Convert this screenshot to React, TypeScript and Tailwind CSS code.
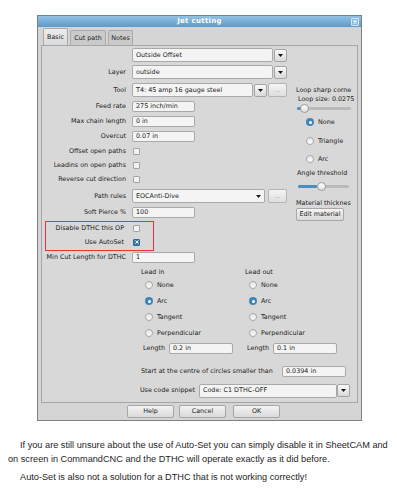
import React from 'react';

type Kids = { children?: React.ReactNode };

const Label = ({ children }: Kids) => (
  <div className="w-[84px] mr-[6px] shrink-0 text-right whitespace-nowrap">{children}</div>
);

const Field = ({ className = '', children }: Kids & { className?: string }) => (
  <div
    className={`flex items-center shrink-0 border border-[#a9a9a9] rounded-[2px] bg-[#f4f4f4] pl-[3px] whitespace-nowrap overflow-hidden ${className}`}
  >
    {children}
  </div>
);

const Arrow = () => (
  <svg width="5" height="3" viewBox="0 0 5 3">
    <path d="M0 0h5L2.5 3z" fill="#151515" />
  </svg>
);

const DropBtn = ({ className = '' }: { className?: string }) => (
  <div
    className={`flex items-center justify-center shrink-0 w-[13px] h-[13px] border border-[#a4a4a4] rounded-[2px] bg-linear-to-b from-[#fafafa] to-[#d9d9d9] ${className}`}
  >
    <Arrow />
  </div>
);

const DotsBtn = ({ className = '' }: { className?: string }) => (
  <div
    className={`flex items-center justify-center shrink-0 w-[19px] h-[14px] border border-[#b4b4b4] rounded-[2px] bg-linear-to-b from-[#f4f4f4] to-[#dedede] text-[#9a9a9a] ${className}`}
  >
    ...
  </div>
);

const Check = ({ on }: { on?: boolean }) =>
  on ? (
    <div className="flex items-center justify-center w-[7px] h-[7px] rounded-[1px] bg-[#3d7fb2] border border-[#2e6898]">
      <svg width="4" height="4" viewBox="0 0 4 4">
        <path d="M0.5 0.5L3.5 3.5M3.5 0.5L0.5 3.5" stroke="#fff" strokeWidth="1" />
      </svg>
    </div>
  ) : (
    <div className="w-[7px] h-[7px] rounded-[1px] bg-[#f2f2f2] border border-[#a3a3a3]" />
  );

const Radio = ({ on }: { on?: boolean }) =>
  on ? (
    <div className="flex items-center justify-center shrink-0 w-[8px] h-[8px] rounded-full bg-[#3f85b9]">
      <div className="w-[3px] h-[3px] rounded-full bg-white" />
    </div>
  ) : (
    <div className="shrink-0 w-[8px] h-[8px] rounded-full bg-linear-to-b from-[#e6e6e6] to-white border border-[#a8a8a8]" />
  );

const Slider = ({ track, fill, thumb }: { track: string; fill: string; thumb: string }) => (
  <div className={`relative h-[3px] rounded-full bg-[#bababa] ${track}`}>
    <div className={`absolute left-0 top-0 h-full rounded-full bg-[#4a8fc2] ${fill}`} />
    <div
      className={`absolute top-[-3px] w-[9px] h-[9px] rounded-full border border-[#9b9b9b] bg-linear-to-b from-white to-[#e0e0e0] ${thumb}`}
    />
  </div>
);

const Btn = ({ className = '', children }: Kids & { className?: string }) => (
  <div
    className={`flex items-center justify-center h-[13px] border border-[#a6a6a6] rounded-[2px] bg-linear-to-b from-[#f3f3f3] to-[#dadada] ${className}`}
  >
    {children}
  </div>
);

const LEADS: [string, boolean][] = [
  ['None', false],
  ['Arc', true],
  ['Tangent', false],
  ['Perpendicular', false],
];

export default function App() {
  return (
    <div className="w-[397px] h-[500px] overflow-hidden bg-white pt-[15px] font-['DejaVu_Sans',sans-serif] text-[6.4px] leading-none text-[#222]">
      {/* dialog */}
      <div className="ml-[37px] w-[325px] border-x border-b border-[#808080] bg-[#d5d5d5]">
        <div className="grid grid-cols-[1fr_auto_1fr] items-center h-[12px] border-t border-[#4d8cbc] bg-linear-to-b from-[#93c2e3] to-[#5b9bca]">
          <div />
          <span className="font-bold text-white text-[7px] tracking-[0.3px]">Jet cutting</span>
          <div className="justify-self-end mr-[2px] flex items-center justify-center w-[8px] h-[8px] rounded-[1px] border border-[#d3e6f3] bg-[#8ebbdd]">
            <svg width="4" height="4" viewBox="0 0 4 4">
              <path d="M0.5 0.5L3.5 3.5M3.5 0.5L0.5 3.5" stroke="#fff" strokeWidth="1.1" />
            </svg>
          </div>
        </div>

        {/* tabs */}
        <div className="flex items-end h-[18px] pl-[5px] gap-[2px]">
          <div className="flex items-center justify-center w-[25px] h-[17px] border border-b-0 border-[#a9a9a9] rounded-t-[2px] bg-linear-to-b from-[#ececec] to-[#dadada]">
            Basic
          </div>
          <div className="flex items-center justify-center w-[36px] h-[15px] border border-b-0 border-[#aaaaaa] rounded-t-[2px] bg-[#cacaca]">
            Cut path
          </div>
          <div className="flex items-center justify-center w-[25px] h-[15px] border border-b-0 border-[#aaaaaa] rounded-t-[2px] bg-[#cacaca]">
            Notes
          </div>
        </div>

        {/* panel */}
        <div className="ml-[3px] w-[317px] h-[358px] border border-[#a7a7a7] bg-[#d8d8d8]">
          <div className="flex">
            <div className="w-[250px] shrink-0">
              <div className="flex items-center mt-[2px] h-[14px]">
                <Label />
                <Field className="w-[141px] h-[14px]">Outside Offset</Field>
                <DropBtn className="ml-[1px]" />
              </div>
              <div className="flex items-center mt-[3px] h-[14px]">
                <Label>Layer</Label>
                <Field className="w-[141px] h-[14px]">outside</Field>
                <DropBtn className="ml-[1px]" />
              </div>
              <div className="flex items-center mt-[4px] h-[14px]">
                <Label>Tool</Label>
                <Field className="w-[121px] h-[14px]">T4: 45 amp 16 gauge steel</Field>
                <DropBtn className="ml-[1px]" />
                <DotsBtn className="ml-[1px]" />
              </div>
              <div className="flex items-center mt-[4px] h-[11px]">
                <Label>Feed rate</Label>
                <Field className="w-[63px] h-[11px]">275 inch/min</Field>
              </div>
              <div className="flex items-center mt-[4px] h-[11px]">
                <Label>Max chain length</Label>
                <Field className="w-[63px] h-[11px]">0 in</Field>
              </div>
              <div className="flex items-center mt-[4px] h-[11px]">
                <Label>Overcut</Label>
                <Field className="w-[63px] h-[11px]">0.07 in</Field>
              </div>
              <div className="flex items-center mt-[2px] h-[14px]">
                <Label>Offset open paths</Label>
                <div className="ml-[1px]"><Check /></div>
              </div>
              <div className="flex items-center h-[14px]">
                <Label>Leadins on open paths</Label>
                <div className="ml-[1px]"><Check /></div>
              </div>
              <div className="flex items-center h-[14px]">
                <Label>Reverse cut direction</Label>
                <div className="ml-[1px]"><Check /></div>
              </div>
              <div className="flex items-center mt-[3px] h-[14px]">
                <Label>Path rules</Label>
                <Field className="w-[133px] h-[14px] justify-between pr-[3px]">
                  <span>EOCAnti-Dive</span>
                  <Arrow />
                </Field>
                <DotsBtn className="ml-[3px]" />
              </div>
              <div className="flex items-center mt-[4px] h-[11px]">
                <Label>Soft Pierce %</Label>
                <Field className="w-[63px] h-[11px]">100</Field>
              </div>
              <div className="mt-[3px] ml-[3px] w-[109px] border border-[#e23535]">
                <div className="flex items-center h-[12px]">
                  <div className="w-[78px] text-right whitespace-nowrap">Disable DTHC this OP</div>
                  <div className="ml-[9px]"><Check /></div>
                </div>
                <div className="flex items-center h-[16px]">
                  <div className="w-[78px] text-right whitespace-nowrap">Use AutoSet</div>
                  <div className="ml-[9px]"><Check on /></div>
                </div>
              </div>
              <div className="flex items-center mt-[1px] h-[11px]">
                <Label>Min Cut Length for DTHC</Label>
                <Field className="w-[63px] h-[11px]">1</Field>
              </div>
            </div>

            {/* right column */}
            <div className="w-[63px] shrink-0 pt-[39px]">
              <div className="h-[10px] flex items-center pl-[4px] whitespace-nowrap">Loop sharp corne</div>
              <div className="h-[9px] flex items-center pl-[6px] whitespace-nowrap">Loop size: 0.0275</div>
              <div className="h-[9px] flex items-center">
                <Slider track="ml-[5px] w-[54px]" fill="w-[4px]" thumb="left-[3px]" />
              </div>
              <div className="mt-[2px] h-[14px] flex items-center pl-[14px] gap-[4px]">
                <Radio on />
                None
              </div>
              <div className="mt-[5px] h-[14px] flex items-center pl-[14px] gap-[4px]">
                <Radio />
                Triangle
              </div>
              <div className="mt-[4px] h-[14px] flex items-center pl-[14px] gap-[4px]">
                <Radio />
                Arc
              </div>
              <div className="mt-[2px] h-[10px] flex items-center pl-[5px] whitespace-nowrap">Angle threshold</div>
              <div className="mt-[4px] h-[9px] flex items-center">
                <Slider track="ml-[6px] w-[51px]" fill="w-[19px]" thumb="left-[19px]" />
              </div>
              <div className="mt-[7px] h-[10px] flex items-center pl-[4px] whitespace-nowrap">Material thicknes</div>
              <Btn className="ml-[4px] w-[48px]">Edit material</Btn>
            </div>
          </div>

          {/* leads */}
          <div className="flex items-center mt-[5px] h-[9px]">
            <div className="ml-[99px] w-[104px]">Lead in</div>
            <div>Lead out</div>
          </div>
          {LEADS.map(([t, on]) => (
            <div key={t} className="flex items-center h-[16px]">
              <div className="ml-[99px] w-[104px] flex items-center pl-[4px] gap-[4px]">
                <Radio on={on} />
                {t}
              </div>
              <div className="flex items-center pl-[4px] gap-[4px]">
                <Radio on={on} />
                {t}
              </div>
            </div>
          ))}
          <div className="flex items-center h-[14px]">
            <div className="ml-[99px] w-[104px] flex items-center pl-[2px]">
              <span className="w-[23px]">Length</span>
              <Field className="ml-[3px] w-[64px] h-[11px]">0.2 in</Field>
            </div>
            <div className="flex items-center pl-[2px]">
              <span className="w-[23px]">Length</span>
              <Field className="ml-[3px] w-[64px] h-[11px]">0.1 in</Field>
            </div>
          </div>
          <div className="flex items-center mt-[9px] h-[14px] pl-[99px]">
            <span className="w-[141px] whitespace-nowrap">Start at the centre of circles smaller than</span>
            <Field className="w-[64px] h-[11px]">0.0394 in</Field>
          </div>
          <div className="flex items-center mt-[5px] h-[15px] pl-[95px]">
            <span className="w-[58px] text-right whitespace-nowrap">Use code snippet</span>
            <Field className="ml-[4px] w-[138px] h-[14px]">Code: C1 DTHC-OFF</Field>
            <DropBtn />
          </div>
        </div>

        {/* buttons */}
        <div className="flex items-center mt-[2px] mb-[2px] h-[13px]">
          <Btn className="ml-[89px] w-[47px]">Help</Btn>
          <Btn className="ml-[5px] w-[47px]">Cancel</Btn>
          <Btn className="ml-[7px] w-[47px]">OK</Btn>
        </div>
      </div>

      {/* text below */}
      <div className="mt-[17px] pl-[8px] w-[392px] font-['Liberation_Sans',Arial,sans-serif] text-[9.2px] leading-[14px] text-[#1e1e1e]">
        <p className="indent-[12px]">
          If you are still unsure about the use of Auto-Set you can simply disable it in SheetCAM and on screen in
          CommandCNC and the DTHC will operate exactly as it did before.
        </p>
        <p className="indent-[12px] mt-[4px]">Auto-Set is also not a solution for a DTHC that is not working correctly!</p>
      </div>
    </div>
  );
}
